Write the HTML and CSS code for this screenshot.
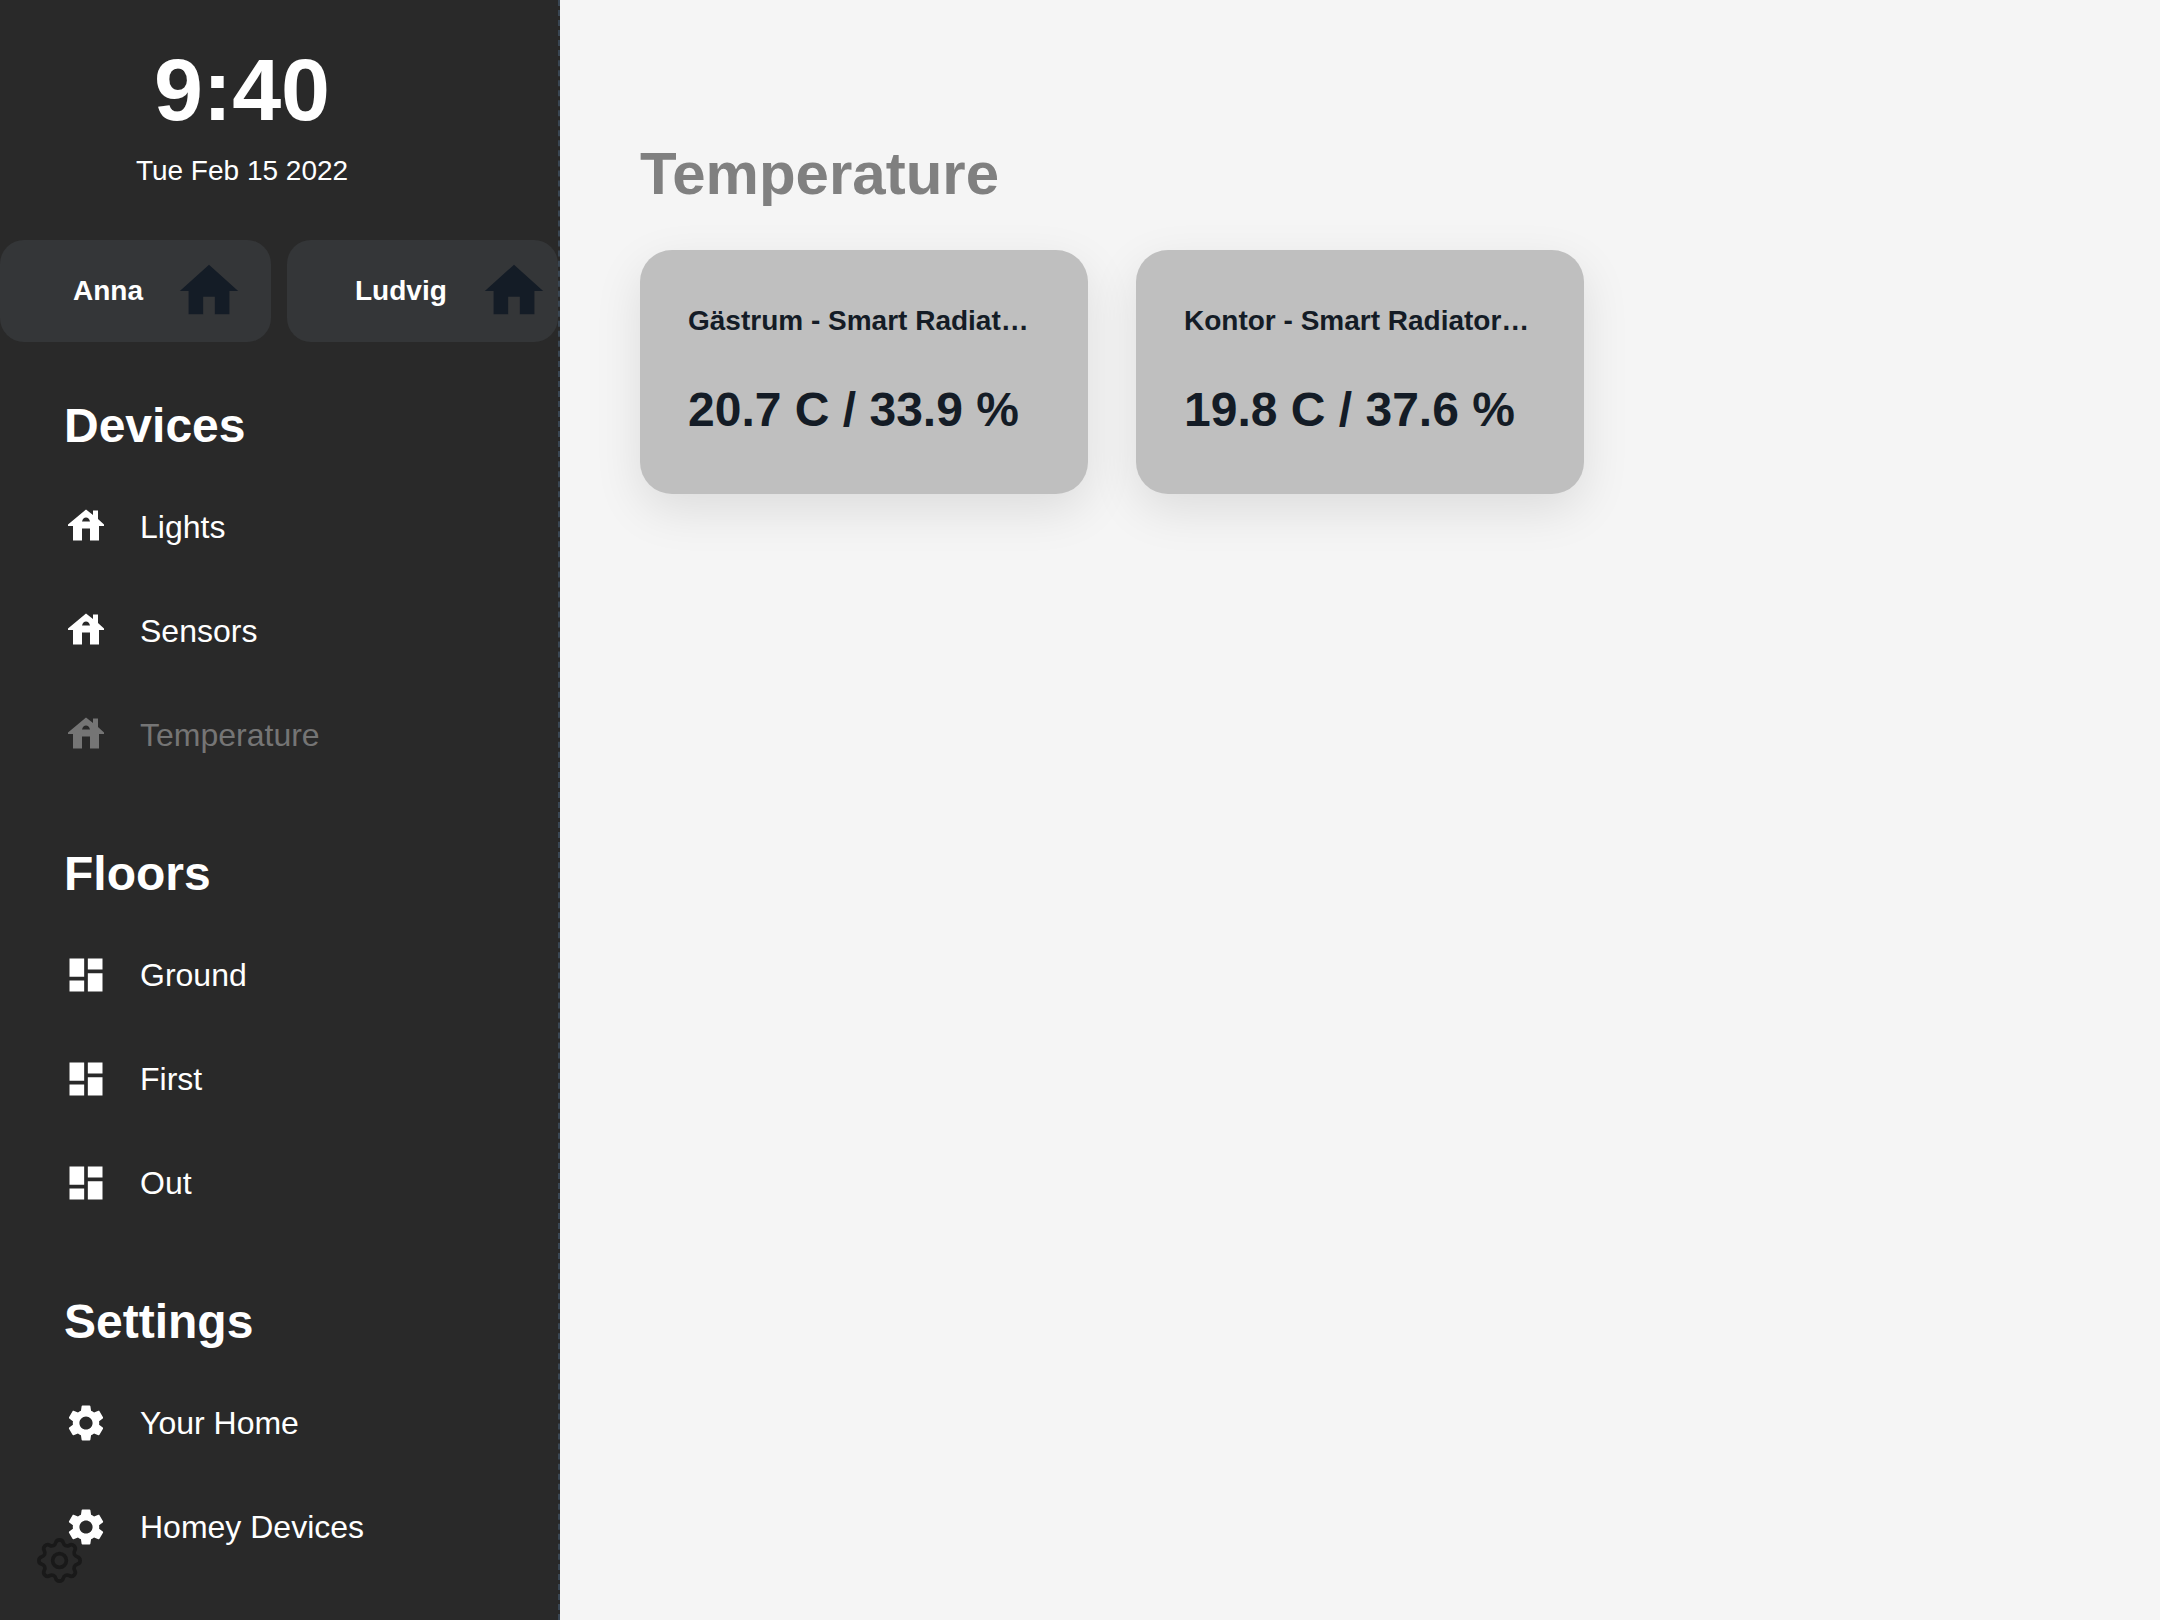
FILE: index.html
```html
<!DOCTYPE html>
<html lang="en">
<head>
  <meta charset="UTF-8">
  <title>Temperature</title>
  <link rel="stylesheet" href="styles.css">
</head>
<body>
  <svg class="defs" width="0" height="0">
    <symbol id="house" viewBox="-4 -4.5 44 44">
      <path fill-rule="evenodd" d="M18 0L25 5.5V1H30V9.5L36 15V16.5H31V31H22V19H14V31H5V16.5H0V15ZM14 12H22Q21 8 18 8Q15 8 14 12Z"/>
    </symbol>
    <symbol id="grid" viewBox="0 0 24 24">
      <path d="M3 13h8V3H3v10zm0 8h8v-6H3v6zm10 0h8V11h-8v10zm0-18v6h8V3h-8z"/>
    </symbol>
    <symbol id="cog" viewBox="0 0 24 24">
      <path d="M19.14 12.94c.04-.3.06-.61.06-.94 0-.32-.02-.64-.07-.94l2.03-1.58c.18-.14.23-.41.12-.61l-1.92-3.32c-.12-.22-.37-.29-.59-.22l-2.39.96c-.5-.38-1.03-.7-1.62-.94l-.36-2.54c-.04-.24-.24-.41-.48-.41h-3.84c-.24 0-.43.17-.47.41l-.36 2.54c-.59.24-1.13.57-1.62.94l-2.39-.96c-.22-.08-.47 0-.59.22L2.74 8.87c-.12.21-.08.47.12.61l2.03 1.58c-.05.3-.09.63-.09.94s.02.64.07.94l-2.03 1.58c-.18.14-.23.41-.12.61l1.92 3.32c.12.22.37.29.59.22l2.39-.96c.5.38 1.03.7 1.62.94l.36 2.54c.05.24.24.41.48.41h3.84c.24 0 .44-.17.47-.41l.36-2.54c.59-.24 1.13-.56 1.62-.94l2.39.96c.22.08.47 0 .59-.22l1.92-3.32c.12-.22.07-.47-.12-.61l-2.01-1.58zM12 15.6c-1.98 0-3.6-1.62-3.6-3.6s1.62-3.6 3.6-3.6 3.6 1.62 3.6 3.6-1.62 3.6-3.6 3.6z"/>
    </symbol>
  </svg>

  <aside class="sidebar">
    <div class="clock">
      <div class="clock-time">9:40</div>
      <div class="clock-date">Tue Feb 15 2022</div>
    </div>

    <div class="users">
      <div class="user-pill user-anna">
        <span>Anna</span>
        <svg class="user-icon" viewBox="0 0 24 24"><path d="M10 20v-6h4v6h5v-8h3L12 3 2 12h3v8z"/></svg>
      </div>
      <div class="user-pill user-ludvig">
        <span>Ludvig</span>
        <svg class="user-icon" viewBox="0 0 24 24"><path d="M10 20v-6h4v6h5v-8h3L12 3 2 12h3v8z"/></svg>
      </div>
    </div>

    <h2 class="nav-title">Devices</h2>
    <ul class="nav-list">
      <li class="nav-item"><svg class="nav-icon"><use href="#house"/></svg>Lights</li>
      <li class="nav-item"><svg class="nav-icon"><use href="#house"/></svg>Sensors</li>
      <li class="nav-item active"><svg class="nav-icon"><use href="#house"/></svg>Temperature</li>
    </ul>

    <h2 class="nav-title">Floors</h2>
    <ul class="nav-list">
      <li class="nav-item"><svg class="nav-icon"><use href="#grid"/></svg>Ground</li>
      <li class="nav-item"><svg class="nav-icon"><use href="#grid"/></svg>First</li>
      <li class="nav-item"><svg class="nav-icon"><use href="#grid"/></svg>Out</li>
    </ul>

    <h2 class="nav-title">Settings</h2>
    <ul class="nav-list">
      <li class="nav-item"><svg class="nav-icon"><use href="#cog"/></svg>Your Home</li>
      <li class="nav-item"><svg class="nav-icon"><use href="#cog"/></svg>Homey Devices</li>
    </ul>

    <svg class="corner-cog" viewBox="0 0 24 24">
      <path d="M10.325 4.317c.426-1.756 2.924-1.756 3.35 0a1.724 1.724 0 002.573 1.066c1.543-.94 3.31.826 2.37 2.37a1.724 1.724 0 001.065 2.572c1.756.426 1.756 2.924 0 3.35a1.724 1.724 0 00-1.066 2.573c.94 1.543-.826 3.31-2.37 2.37a1.724 1.724 0 00-2.572 1.065c-.426 1.756-2.924 1.756-3.35 0a1.724 1.724 0 00-2.573-1.066c-1.543.94-3.31-.826-2.37-2.37a1.724 1.724 0 00-1.065-2.572c-1.756-.426-1.756-2.924 0-3.35a1.724 1.724 0 001.066-2.573c-.94-1.543.826-3.31 2.37-2.37.996.608 2.296.07 2.572-1.065z"/>
      <path d="M15 12a3 3 0 11-6 0 3 3 0 016 0z"/>
    </svg>
  </aside>

  <main class="content">
    <h1 class="page-title">Temperature</h1>
    <div class="cards">
      <div class="card">
        <div class="card-name">Gästrum - Smart Radiator Thermostat</div>
        <div class="card-value">20.7 C / 33.9 %</div>
      </div>
      <div class="card">
        <div class="card-name">Kontor - Smart Radiator Thermostat</div>
        <div class="card-value">19.8 C / 37.6 %</div>
      </div>
    </div>
  </main>
</body>
</html>
```

FILE: styles.css
```css
*{margin: 0; padding: 0; box-sizing: border-box; font-family: "Liberation Sans", Arial, sans-serif;}

html,body{
  width: 100%;
  height: 100%;
}
body{
  display: flex;
  height: 1620px;
  overflow: hidden;
  background-color: #f5f5f5;
}
.defs{
  position: absolute;
}

.sidebar{
  position: relative;
  width: 560px;
  flex-shrink: 0;
  background-color: #292929;
  border-right: 2px dashed #3a4754;
  color: white;
  overflow: hidden;
}
.clock{
  padding-top: 40px;
  text-align: center;
  width: 484px;
}
.clock-time{
  font-size: 88px;
  font-weight: bold;
  line-height: 100px;
}
.clock-date{
  margin-top: 14px;
  font-size: 28px;
  line-height: 34px;
}

.users{
  display: flex;
  gap: 16px;
  margin-top: 52px;
}
.user-pill{
  width: 271px;
  height: 102px;
  display: flex;
  align-items: center;
  border-radius: 24px;
  background-color: #343638;
  font-size: 28px;
  font-weight: bold;
}
.user-anna{
  padding-left: 73px;
  gap: 31px;
}
.user-ludvig{
  padding-left: 68px;
  gap: 32px;
}
.user-icon{
  width: 70px;
  height: 70px;
  fill: #141c26;
}

.nav-title{
  margin-left: 64px;
  margin-top: 56px;
  font-size: 48px;
  line-height: 56px;
}
.nav-list{
  list-style: none;
  margin-top: 21px;
  margin-bottom: 59px;
}
.nav-item{
  display: flex;
  align-items: center;
  height: 104px;
  padding-left: 64px;
  font-size: 32px;
  color: white;
  fill: white;
}
.nav-item.active{
  color: #757575;
  fill: #757575;
}
.nav-icon{
  width: 44px;
  height: 44px;
  margin-right: 32px;
}

.corner-cog{
  position: absolute;
  left: 32px;
  bottom: 32px;
  width: 55px;
  height: 55px;
  fill: none;
  stroke: #191919;
  stroke-width: 1.6;
}

.content{
  flex: 1;
  padding: 137px 80px 0;
}
.page-title{
  font-size: 60px;
  line-height: 74px;
  color: #808080;
}
.cards{
  display: flex;
  gap: 48px;
  margin-top: 39px;
}
.card{
  width: 448px;
  height: 244px;
  padding: 54px 48px 0;
  border-radius: 32px;
  background-color: #bfbfbf;
  box-shadow: 0 16px 48px rgba(0, 0, 0, 0.1);
  color: #141c26;
}
.card-name{
  font-size: 28px;
  font-weight: bold;
  line-height: 34px;
  white-space: nowrap;
  overflow: hidden;
  text-overflow: ellipsis;
}
.card-value{
  margin-top: 44px;
  font-size: 48px;
  font-weight: bold;
  line-height: 56px;
}
```
